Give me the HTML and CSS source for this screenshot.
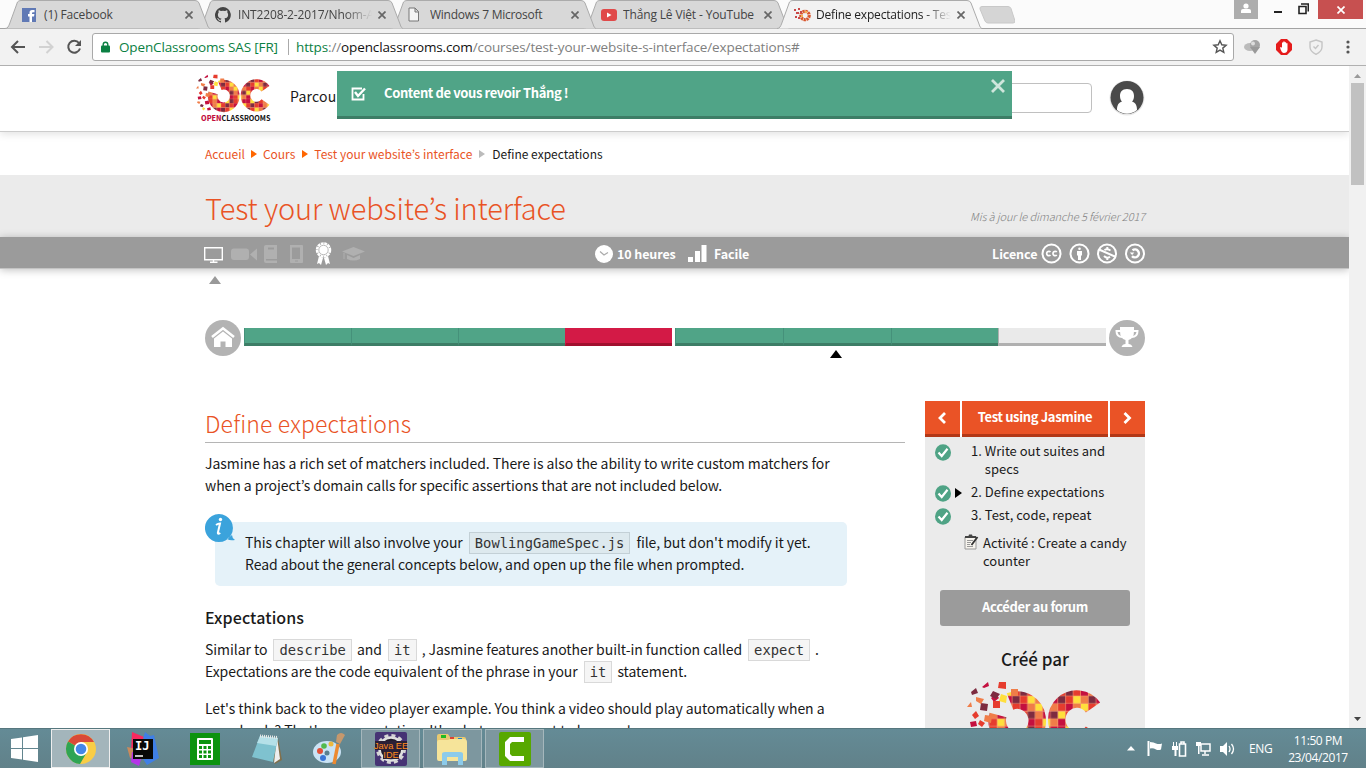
FILE: index.html
```html
<!DOCTYPE html>
<html lang="fr">
<head>
<meta charset="utf-8">
<title>Define expectations - Test your website's interface</title>
<link rel="stylesheet" href="styles.css">
</head>
<body>
<svg class="defs" width="0" height="0">
  <defs>
    <pattern id="mosaic" width="45.6" height="45.6" patternUnits="userSpaceOnUse">
      <rect width="45.6" height="45.6" fill="#f29a78"/>
      <path fill="#c4103f" d="M0 0h7v7H0zM22.8 7.6h7v7h-7zM38 15.2h7v7h-7zM7.6 22.8h7v7h-7zM30.4 30.4h7v7h-7zM15.2 38h7v7h-7zM38 0h7v7h-7zM0 38h7v7H0z"/>
      <path fill="#7d2b40" d="M15.2 0h7v7h-7zM0 15.2h7v7H0zM30.4 15.2h7v7h-7zM15.2 30.4h7v7h-7zM38 30.4h7v7h-7zM7.6 7.6h7v7h-7z"/>
      <path fill="#ffdf3c" d="M7.6 0h7v7h-7zM38 7.6h7v7h-7zM15.2 15.2h7v7h-7zM22.8 22.8h7v7h-7zM0 30.4h7v7H0zM30.4 38h7v7h-7z"/>
      <path fill="#e63c2e" d="M22.8 0h7v7h-7zM0 7.6h7v7H0zM15.2 7.6h7v7h-7zM7.6 15.2h7v7h-7zM30.4 22.8h7v7h-7zM0 22.8h7v7H0zM22.8 38h7v7h-7zM7.6 30.4h7v7h-7z"/>
      <path fill="#f07d48" d="M30.4 0h7v7h-7zM30.4 7.6h7v7h-7zM22.8 15.2h7v7h-7zM15.2 22.8h7v7h-7zM38 22.8h7v7h-7zM22.8 30.4h7v7h-7zM7.6 38h7v7h-7zM38 38h7v7h-7z"/>
    </pattern>
    <symbol id="oc" viewBox="0 0 136 72">
      <path d="M43 20.500A20 20.500 0 1 1 31 34" fill="none" stroke="url(#mosaic)" stroke-width="17.500"/>
      <path d="M126 26.500A20 20.500 0 1 0 126 50.500" fill="none" stroke="url(#mosaic)" stroke-width="17.500"/>
      <path fill="#c4103f" d="M15 6l6-5 1 4-5 2zM24 17l5-4 3 4-5 4zM3 41l6-1 1 5-6 1zM16 49l7-1 1 6-7 1zM20 62l6-2 1 5-6 1z"/>
      <path fill="#7d2b40" d="M4 11l5-4 2 5-6 2zM26 10l7 3-4 5-6-3zM14 22l7 1-1 7-7-1zM9 54l5 2-2 4-5-2z"/>
      <path fill="#e63c2e" d="M32 1h7v7l-8-1zM26 20h7v7h-7zM5 34l4-4 3 5-4 3zM13 39l5 3-3 4-4-3z"/>
      <path fill="#f07d48" d="M9 16l8 2-3 5-5-3zM0 26l4-5 1 5zM18 34l7 1-1 7-7-2zM44 8h7v7h-7zM3 49l5 1-2 4-4-2z"/>
      <path fill="#ffdf3c" d="M34 13l6 2-1 7-7-2zM13 60l4 2-3 4-3-3z"/>
    </symbol>
    <symbol id="tabshape" viewBox="0 0 205 29" preserveAspectRatio="none">
      <path d="M0 28.500C3 28.500 3.500 26 4.500 24L12.500 2Q13.500.5 16 .5H190Q193 .5 194 3L202 24C203 27 203.500 28.500 206 28.500" />
    </symbol>
    <symbol id="cross" viewBox="0 0 8 8"><path d="M.5.5l7 7m0-7l-7 7" stroke-width="1.700" fill="none"/></symbol>
    <symbol id="check" viewBox="0 0 16 17"><ellipse cx="8" cy="8.500" rx="8" ry="8.300" fill="#4fa385"/><path d="M3.500 8.500l3.200 3.500L12.500 4.800" fill="none" stroke="#fff" stroke-width="2.200"/></symbol>
  </defs>
</svg>
<div class="window">
  <div class="tabstrip">
    <div class="tab t1"><svg class="shape"><use href="#tabshape"/></svg>
      <svg class="fav" width="14" height="14"><rect width="14" height="14" fill="#6079b5"/><path d="M7.500 14V8.500H6V6h1.500V4.500Q7.500 2 10 2h2.500v2.300H11Q10 4.300 10 5.200V6h2.400L12 8.500h-2V14z" fill="#fff"/></svg>
      <span class="label">(1) Facebook</span><svg class="x"><use href="#cross"/></svg></div>
    <div class="tab t2"><svg class="shape"><use href="#tabshape"/></svg>
      <svg class="fav" width="16" height="16" viewBox="0 0 16 16"><path fill="#444" d="M8 0a8 8 0 0 0-2.500 15.600c.4.100.5-.2.500-.4v-1.400c-2.200.5-2.700-1-2.700-1-.4-.9-.9-1.200-.9-1.200-.7-.5.1-.5.1-.5.8.1 1.200.8 1.200.8.700 1.200 1.900.9 2.300.7.100-.5.300-.9.500-1.100-1.800-.2-3.600-.9-3.600-4 0-.9.300-1.600.8-2.100-.1-.2-.4-1 .1-2.100 0 0 .7-.2 2.200.8a7.500 7.500 0 0 1 4 0c1.500-1 2.200-.8 2.200-.8.400 1.100.2 1.900.1 2.100.5.600.8 1.300.8 2.100 0 3.100-1.900 3.700-3.700 3.900.3.300.6.800.6 1.500v2.200c0 .2.100.5.600.4A8 8 0 0 0 8 0z"/></svg>
      <span class="label fade">INT2208-2-2017/Nhom-A</span><svg class="x"><use href="#cross"/></svg></div>
    <div class="tab t3"><svg class="shape"><use href="#tabshape"/></svg>
      <svg class="fav" width="12" height="15"><path d="M1 1h6l3.500 3.500V14H1zM7 1v4h3.500" fill="#f4f4f4" stroke="#777"/></svg>
      <span class="label">Windows 7 Microsoft</span><svg class="x"><use href="#cross"/></svg></div>
    <div class="tab t4"><svg class="shape"><use href="#tabshape"/></svg>
      <svg class="fav" width="16" height="12"><rect width="16" height="12" rx="3" fill="#e04a4a"/><path d="M6 3.500l4.500 2.500L6 8.500z" fill="#fff"/></svg>
      <span class="label">Thắng Lê Việt - YouTube</span><svg class="x"><use href="#cross"/></svg></div>
    <div class="tab active"><svg class="shape"><use href="#tabshape"/></svg>
      <svg class="fav" width="17" height="15" viewBox="0 0 17 15"><circle cx="11" cy="8.500" r="4.200" fill="none" stroke="#d9572e" stroke-width="3.200" stroke-dasharray="2.200 .6"/><path d="M0 2h2v2H0zM4 1h2v2H4zM2 5h3v2H2zM6 4h2v2H6zM1 9h2v2H1zM4 10h2v2H4z" fill="#c84848"/><path d="M11 4h2v2h-2zM7 8h2v2H7z" fill="#f6b050"/></svg>
      <span class="label fade">Define expectations - Test</span><svg class="x"><use href="#cross"/></svg></div>
    <svg class="newtab" width="36" height="18"><path d="M3 .5h26q2 0 3 2l4 12.500q.3 2-2 2H9q-2 0-3-2L1 3Q.5.500 3 .5z" fill="#d5d5d5" stroke="#c8c8c8"/></svg>
    <div class="controls">
      <span class="user"><svg width="10" height="10"><circle cx="5" cy="3" r="2.600" fill="#fff"/><path d="M0 10V8q0-2 2-2h6q2 0 2 2v2z" fill="#fff"/></svg></span>
      <svg width="8" height="19"><path d="M0 12h8" stroke="#222" stroke-width="2"/></svg>
      <svg class="restore" width="11" height="19"><path d="M1 6.500h7v7H1zM3 4h7.300v7.500" fill="none" stroke="#222" stroke-width="1.600"/></svg>
      <span class="close"><svg width="8" height="8" stroke="#fff"><use href="#cross"/></svg></span>
    </div>
  </div>
  <div class="toolbar">
    <svg class="navs" width="76" height="20" fill="none" stroke-width="2"><path d="M15 10H2M8 4l-6 6 6 6" stroke="#555"/><path d="M29 10h13M36.500 4l6 6-6 6" stroke="#d2d2d2"/><path d="M69 6a6 6 0 1 0 1 5.500" stroke="#555"/><path d="M71 3v6h-6z" fill="#555"/></svg>
    <div class="omnibox">
      <svg width="9" height="12"><path d="M2.200 5V3.500a2.300 2.300 0 0 1 4.600 0V5" fill="none" stroke="#0b8043" stroke-width="1.400"/><rect y="4.500" width="9" height="7" rx="1" fill="#0b8043"/></svg>
      <span class="cert">OpenClassrooms SAS [FR]</span><i></i>
      <span class="url"><b>https</b>://<em>openclassrooms.com</em>/courses/test-your-website-s-interface/expectations#</span>
      <svg class="star" width="16" height="16" viewBox="0 0 16 16"><path d="M8 1.800l1.800 4 4.300.4-3.300 2.900 1 4.300L8 11.100l-3.800 2.300 1-4.300L1.900 6.200l4.300-.4z" fill="none" stroke="#555" stroke-width="1.400"/></svg>
    </div>
    <svg class="ext" width="17" height="16"><ellipse cx="6" cy="8" rx="6" ry="4" fill="#bbb"/><ellipse cx="11" cy="6" rx="5" ry="5" fill="#a5a5a5"/><path d="M6 8l5 7 5-7z" fill="#999"/><circle cx="9" cy="4.500" r="2" fill="#ddd"/></svg>
    <svg class="ext e2" width="16" height="16"><path d="M5 0h6l5 5v6l-5 5H5l-5-5V5z" fill="#e51c1c"/><path d="M4 8.500l1.200-.5.800 1V3.500h1.300V2.500h1.400v.7h1.400v1h1.400V11q-.5 3-3.500 3-2.500 0-4-5.500z" fill="#fff"/></svg>
    <svg class="ext e3" width="14" height="16"><path d="M7 1l6 2v5q0 4.500-6 7.300Q1 12.500 1 8V3zM4.500 7.500L6.500 9.500 9.500 6" fill="none" stroke="#c5c5c5" stroke-width="1.400"/></svg>
    <svg class="ext e4" width="4" height="14" fill="#555"><circle cx="2" cy="2" r="1.600"/><circle cx="2" cy="7" r="1.600"/><circle cx="2" cy="12" r="1.600"/></svg>
  </div>
  <div class="viewport">
    <main class="page">
      <header class="top">
        <div class="brand"><svg width="75" height="40"><use href="#oc"/></svg><span class="name"><b>OPEN</b>CLASSROOMS</span></div>
        <span class="parcours">Parcours</span>
        <div class="search"></div>
        <svg class="avatar" width="36" height="36"><circle cx="18" cy="18" r="17.500" fill="#e8e8e8"/><circle cx="18" cy="17.500" r="16.500" fill="#4a4a4a"/><path d="M18 9c5 0 7 3.200 7 7 0 3-1 4.500-2 5.500 3 1 5 3 5 8.500q-10 7.500-20 0c0-5.500 2-7.500 5-8.500-1-1-2-2.500-2-5.500 0-3.800 2-7 7-7z" fill="#fff"/></svg>
        <div class="notice"><svg width="15" height="14"><path d="M11 1.500H1.500v11h11V7" fill="none" stroke="#fff" stroke-width="1.800"/><path d="M4 5l3 4 7-7.500" fill="none" stroke="#fff" stroke-width="2.400"/></svg><span>Content de vous revoir Thắng !</span><svg class="nx" width="14" height="14"><path d="M1 1l12 12M13 1L1 13" stroke="#cfe6dc" stroke-width="2.800"/></svg></div>
      </header>
      <nav class="crumbs"><a>Accueil</a><i></i><a>Cours</a><i></i><a class="c3">Test your website’s interface</a><i class="g"></i><span>Define expectations</span></nav>
      <section class="titlebar"><h1>Test your website’s interface</h1><em>Mis à jour le dimanche 5 février 2017</em></section>
      <section class="meta">
        <svg class="kinds" width="164" height="28" viewBox="0 0 164 28">
          <path d="M.7 8.700h17.600v12H.7zM9.500 21v2M6 23.200h7.500" fill="none" stroke="#fff" stroke-width="1.400"/>
          <g fill="#b0b0b0"><rect x="27" y="9.500" width="18" height="11.500" rx="3"/><path d="M46 15.500l7-6v12z"/><path d="M60 8q0-2 2-2h11v14H62v1.500h11V24H62q-2 0-2-2z"/><path d="M86 6h12q1 0 1 1v16q0 1-1 1H87q-1 0-1-1z"/><path d="M138 12.500L149.500 8 161 12.500 149.500 17zM143 16l6.500 3 6.500-3v4q-6.500 3-13 0zM139.500 14h1v6h-1z"/></g>
          <path d="M64 8.500h6v2h-6zM88 8.500h8v11.500h-8zM91 21.500h3v1h-3z" fill="#9b9b9b"/>
          <circle cx="119.500" cy="11" r="6.500" fill="none" stroke="#fff" stroke-width="2.500" stroke-dasharray="2.800 .6"/><circle cx="119.500" cy="11" r="5.800" fill="#fff"/><circle cx="119.500" cy="11" r="4.700" fill="none" stroke="#aaa" stroke-width=".8"/><path d="M115 17l4 2-2 7-2-2-2 1zM124 17l-4 2 2 7 2-2 2 1z" fill="#fff"/>
        </svg>
        <svg class="clock" width="18" height="18"><circle cx="9" cy="9" r="9" fill="#fff"/><path d="M5 6.500L9 10l4-2.500" fill="none" stroke="#aaa" stroke-width="1.200"/></svg>
        <b class="hours">10 heures</b>
        <svg class="bars" width="19" height="17" fill="#fff"><path d="M0 12h5v5H0zM7 6h5v11H7zM13.500 0h5v17h-5z"/></svg>
        <b class="level">Facile</b>
        <b class="lic">Licence</b>
        <svg class="cc" width="105" height="21" fill="none" stroke="#fff" stroke-width="2"><circle cx="10.500" cy="10.500" r="9"/><circle cx="38.500" cy="10.500" r="9"/><circle cx="66" cy="10.500" r="9"/><circle cx="94" cy="10.500" r="9"/><path d="M9.500 9a2.200 2.200 0 1 0 0 3M15.800 9a2.200 2.200 0 1 0 0 3" stroke-width="1.700"/><circle cx="38.500" cy="5.800" r="1.300" fill="#fff" stroke="none"/><path d="M36 8h5v4.500h-1V17h-3v-4.500h-1z" fill="#fff" stroke="none"/><path d="M58 6.500l17 7.500M69.500 7.500q-3.500-2-6-.5M63 13q3 3 6 .7M66.300 4v2M66.300 15v2"/><path d="M91.500 7.200a4 4 0 1 1-.5 6" stroke-width="2.400"/><path d="M88.800 9.500h4.500l-2.200 2.500z" fill="#fff" stroke="none"/></svg>
      </section>
      <div class="marker"></div>
      <section class="progress">
        <svg width="36" height="36"><circle cx="18" cy="18" r="18" fill="#b3b3b3"/><path d="M9 17l9-7.500 9 7.500v10h-6.500v-5.500h-5V27H9z" fill="#fff"/><path d="M6.500 18.500L18 9.500l11.500 9" fill="none" stroke="#b3b3b3" stroke-width="3"/><path d="M7 17L18 8.300 29 17" fill="none" stroke="#fff" stroke-width="2.600"/></svg>
        <div class="track"><i class="p"></i><i class="p"></i><i class="p"></i><i class="p red"></i><i class="gap"></i><i></i><i></i><i></i><i class="todo"></i></div>
        <svg width="36" height="36"><circle cx="18" cy="18" r="18" fill="#b3b3b3"/><path d="M11 7h14v4q0 8-5.500 9v4q3 0 4 3h-11q1-3 4-3v-4Q11 19 11 11z" fill="#fff"/><path d="M12 11H7.500q0 6 6 6M24 11h4.500q0 6-6 6" fill="none" stroke="#fff" stroke-width="2"/></svg>
      </section>
      <div class="here"></div>
      <div class="columns">
        <article>
          <h2>Define expectations</h2>
          <p class="intro">Jasmine has a rich set of matchers included. There is also the ability to write custom matchers for<br>when a project’s domain calls for specific assertions that are not included below.</p>
          <div class="info"><svg class="bubble" width="30" height="29"><path d="M14 0a14 14 0 1 1-.1 0zM22 25q3 2 8 1-3-2-3-5z" fill="#3ba3dc"/><path d="M11 11q2-1.500 4-1.500l-2.200 9.500q0 1.500 2.500 0" fill="none" stroke="#fff" stroke-width="2"/><circle cx="15.500" cy="5.500" r="1.700" fill="#fff"/></svg>
            <span>This chapter will also involve your <code>BowlingGameSpec.js</code> file, but don't modify it yet.</span><br><span>Read about the general concepts below, and open up the file when prompted.</span></div>
          <h3>Expectations</h3>
          <p class="sim">Similar to <code>describe</code> and <code>it</code> , Jasmine features another built-in function called <code>expect</code> .<br>Expectations are the code equivalent of the phrase in your <code>it</code> statement.</p>
          <p class="think">Let's think back to the video player example. You think a video should play automatically when a<br>page loads? That's an expectation. It's what you expect to happen!</p>
        </article>
        <aside>
          <div class="chapter"><span class="arr"><svg width="9" height="12"><path d="M7 1L2 6l5 5" fill="none" stroke="#fff" stroke-width="2.800"/></svg></span><span class="name">Test using Jasmine</span><span class="arr"><svg width="9" height="12"><path d="M1.500 1l5 5-5 5" fill="none" stroke="#fff" stroke-width="2.800"/></svg></span></div>
          <ul>
            <li class="a"><svg class="ok" width="16" height="17"><use href="#check"/></svg><span>1. </span><span>Write out suites and<br>specs</span></li>
            <li class="b"><svg class="ok" width="16" height="17"><use href="#check"/></svg><svg class="cur" width="7" height="10"><path d="M0 0l7 5-7 5z"/></svg><span>2. </span><span>Define expectations</span></li>
            <li class="c"><svg class="ok" width="16" height="17"><use href="#check"/></svg><span>3. </span><span>Test, code, repeat</span></li>
          </ul>
          <div class="activity"><svg width="15" height="16"><path d="M1 3h11v12H1z" fill="#f7f4ee" stroke="#999"/><path d="M1 2h3.500l.5-1.500h3L8.500 2H12v2H1z" fill="#444"/><path d="M3 6.500h6M3 8.500h4M3 10.500h3M3 12.500h6" stroke="#999"/><path d="M13.500 3L7.500 11" stroke="#333" stroke-width="1.800"/></svg><span>Activité : Create a candy<br>counter</span></div>
          <div class="forum">Accéder au forum</div>
          <div class="by">Créé par</div>
          <svg class="biglogo" width="136" height="72"><use href="#oc"/></svg>
        </aside>
      </div>
    </main>
    <div class="scroll"><svg width="7" height="4"><path d="M0 4l3.500-4L7 4z" fill="#999"/></svg><div class="thumb"></div><svg class="down" width="7" height="4"><path d="M0 0h7L3.500 4z" fill="#444"/></svg></div>
  </div>
  <footer class="taskbar">
    <svg class="start" width="27" height="27" fill="#fff"><path d="M0 4l11-1.600V13H0zM12 2.200L27 0v13H12zM0 14h11v10.500L0 23zM12 14h15v13l-15-2.200z"/></svg>
    <span class="app on"><svg width="30" height="30" viewBox="0 0 30 30"><circle cx="15" cy="15" r="15" fill="#f9cd45"/><path d="M15 15L2 7.500A15 15 0 0 1 28 8H15z" fill="#d94a38"/><path d="M2 7.500A15 15 0 0 0 14 30l7-12-6-3z" fill="#2fa454"/><circle cx="15" cy="15" r="7" fill="#fff"/><circle cx="15" cy="15" r="5.300" fill="#4487e8"/></svg></span>
    <span class="app"><svg width="32" height="34" viewBox="0 0 32 34"><path d="M5 0l12 5 2 14L4 20z" fill="#f8295f"/><path d="M18 0l5 4 4-1 5 23-12 7-8-12z" fill="#3f7fe6"/><path d="M0 15l10 2 3 12-10-3z" fill="#c98a5c"/><path d="M5 20l10 4-3 10-8-4z" fill="#b534e8"/><rect x="6" y="7" width="20" height="20" fill="#080808"/><path d="M8 24h8" stroke="#fff" stroke-width="1.500"/><text x="8" y="18" class="ij">IJ</text></svg></span>
    <span class="app"><svg width="30" height="32"><path fill="#0c930f" d="M0 0h30v32H0z"/><rect x="7" y="5" width="16" height="22" rx="1" fill="#fff"/><path d="M9 7h12v4H9zM9 13h3v3H9zM13.500 13h3v3h-3zM18 13h3v3h-3zM9 17.500h3v3H9zM13.500 17.500h3v3h-3zM18 17.500h3v3h-3zM9 22h3v3H9zM13.500 22h3v3h-3zM18 22h3v3h-3z" fill="#0c930f"/></svg></span>
    <span class="app"><svg width="32" height="32"><path d="M9 3l18 2 4 22-7 4z" fill="#82704c"/><path d="M26 4l3 22-6 4z" fill="#eee"/><path d="M9 3l18 2-5 24L1 24z" fill="#7fc2cf"/><path d="M9 3l18 2-2 8L6 10z" fill="#b5e0e8"/><path d="M9 3l18 1.500" stroke="#e8e8e8" stroke-width="3" stroke-dasharray="1 1"/></svg></span>
    <span class="app"><svg width="32" height="33"><ellipse cx="14" cy="20" rx="14" ry="11" fill="#cae3f5"/><circle cx="7" cy="19" r="3" fill="#e25038"/><circle cx="11" cy="14" r="2.800" fill="#52b94c"/><circle cx="18" cy="12" r="2.500" fill="#edb83d"/><circle cx="14" cy="21" r="2.500" fill="#597f8f"/><circle cx="10" cy="26" r="3" fill="#3a75d6"/><path d="M21 32l4-20" stroke="#ed8a30" stroke-width="3.500"/><path d="M23 10l1-7q4-4 8 0l-5 9z" fill="#c6986d"/></svg></span>
    <span class="app run"><svg width="32" height="34"><rect width="32" height="34" rx="2" fill="#463374"/><circle cx="16" cy="17" r="11.500" fill="#211b2c" stroke="#e1e1e1" stroke-width="2.500"/><circle cx="16" cy="17" r="13.500" fill="none" stroke="#d5d5d5" stroke-width="3" stroke-dasharray="4 3.070"/><path d="M0 9h32v9H0zM8 18h16v9H8z" fill="#2b2036"/><text x="16" y="17" text-anchor="middle" class="jee">Java EE</text><text x="16" y="26" text-anchor="middle" class="jee">IDE</text></svg></span>
    <span class="app run"><svg width="33" height="32"><path d="M1 3q0-2 2-2h9l2 3h14q2 0 2 2v20H1z" fill="#e8c970"/><path d="M5 2h5v3H5z" fill="#2b2"/><path d="M14 4h4v2h-4z" fill="#d43"/><path d="M22 5h4v2h-4z" fill="#28c"/><path d="M1 9q0-2 2-2h9l2-1h14q3 0 3 3v17q0 2-2 2H3q-2 0-2-2z" fill="#f6e49a"/><path d="M6 32V21q0-2 3-2h15q3 0 3 2v11h-5v-8H11v8z" fill="#8ccbea"/></svg></span>
    <span class="app run"><svg width="32" height="34"><rect width="32" height="34" rx="2" fill="#57a800"/><path d="M25 5v5H13l-2 2v10l2 2h12v5H11l-5-5V10l5-5z" fill="#fff"/></svg></span>
    <div class="tray">
      <svg width="8" height="5"><path d="M0 4.500L4 0l4 4.500z" fill="#fff"/></svg>
      <svg class="flag" width="16" height="17"><path d="M1.500 1v15" stroke="#fff" stroke-width="2"/><path d="M3 2q4 0 6 1.500 3 1 6 0l-1 6q-3 1-5 0-3-2-6-1z" fill="#fff"/></svg>
      <svg class="bat" width="15" height="16"><path d="M7.500 3h6v12h-6zM9 1h3v2H9z" fill="none" stroke="#fff" stroke-width="1.600"/><path d="M0 5h6v4H4.500v6h-2V9H0zM1 1h1v4H1zM4 1h1v4H4z" fill="#fff"/></svg>
      <svg class="net" width="15" height="16"><path d="M5 3h9v7H5zM9 10v3M6 14h7" fill="none" stroke="#fff" stroke-width="1.500"/><path d="M0 1h5v4H3.500v8H2V5H0z" fill="#fff"/></svg>
      <svg class="vol" width="15" height="14"><path d="M0 4h3l4-4v14l-4-4H0z" fill="#fff"/><path d="M9 4q2 3 0 6M11.500 2q4 5 0 10" fill="none" stroke="#fff" stroke-width="1.300"/></svg>
      <span class="lang">ENG</span>
      <span class="time">11:50 PM<br>23/04/2017</span>
    </div>
  </footer>
</div>
</body>
</html>
```
FILE: styles.css
```css
* { box-sizing: border-box; }
body { margin: 0; overflow: hidden; }
svg { display: block; flex: none; }
.defs { position: absolute; }
h1, h2, h3, p, ul { margin: 0; padding: 0; font-weight: 400; }
.window { width: 1366px; height: 768px; display: flex; flex-direction: column; overflow: hidden; font-family: "Open Sans", sans-serif; }

.tabstrip { height: 29px; flex: none; display: flex; background: #fbfbfb; padding-left: 5px; border-bottom: 1px solid #a3a3a3; }
.tab { position: relative; width: 205px; height: 29px; margin-right: -12px; flex: none; display: flex; align-items: center; padding-left: 17px; z-index: 4; }
.t2 { z-index: 3; }
.t3 { z-index: 2; }
.t4 { z-index: 1; }
.tab.active { z-index: 5; }
.shape { position: absolute; left: 0; top: 0; width: 205px; height: 29px; z-index: -1; fill: #d8d8d8; stroke: #ababab; }
.active .shape { fill: #f2f2f2; }
.label { width: 139px; margin-left: 8px; font-size: 12px; color: #444; white-space: nowrap; overflow: hidden; letter-spacing: -.15px; }
.active .label { color: #222; }
.t2 .label { width: 134px; margin-left: 7px; }
.t3 .label { margin-left: 10px; letter-spacing: -.25px; }
.t4 .label { width: 136px; margin-left: 6px; }
.active .label { width: 135px; margin-left: 5px; letter-spacing: -.2px; }
.fade { -webkit-mask-image: linear-gradient(90deg, #000 80%, transparent); mask-image: linear-gradient(90deg, #000 80%, transparent); }
.x { width: 8px; height: 8px; margin-left: auto; margin-right: 17px; stroke: #666; }
.newtab { margin: 6px 0 0 9px; }
.controls { display: flex; margin-left: auto; align-items: flex-start; padding-right: 3px; }
.user { width: 24px; height: 19px; background: #adadad; display: flex; justify-content: center; padding-top: 3px; margin-right: 16px; }
.restore { margin: 0 9px 0 16px; }
.close { width: 45px; height: 19px; background: #c75050; display: flex; align-items: center; justify-content: center; }

.toolbar { height: 37px; flex: none; display: flex; align-items: center; background: #f2f2f2; border-bottom: 1px solid #b0b0b0; padding-left: 10px; }
.navs { margin-right: 6px; }
.omnibox { width: 1142px; height: 28px; background: #fff; border: 1px solid #a9a9a9; border-radius: 3px; display: flex; align-items: center; padding-left: 8px; font-size: 13.5px; white-space: nowrap; }
.cert { color: #0b8043; margin-left: 9px; width: 161px; letter-spacing: -.14px; }
.omnibox i { width: 1px; height: 16px; background: #aaa; margin: 0 7px 0 8px; }
.url { color: #808080; letter-spacing: -.12px; }
.url b { font-weight: 400; color: #0b8043; }
.url em { font-style: normal; color: #111; }
.star { margin-left: auto; margin-right: 5px; }
.ext { margin-left: 10px; }
.e2 { margin-left: 15px; }
.e3 { margin-left: 17px; }
.e4 { margin-left: 23px; }

.viewport { height: 662px; flex: none; display: flex; overflow: hidden; }
.page { width: 1349px; height: 662px; overflow: hidden; background: #fff; color: #1a1a1a; font-family: "Noto Sans CJK KR", "Noto Sans", sans-serif; font-size: 14px; line-height: 22px; }
.top { position: relative; z-index: 1; height: 66px; border-bottom: 1px solid #ccc; box-shadow: 0 2px 8px rgba(0,0,0,.12); display: flex; }
.brand { width: 75px; margin: 8px 0 0 196px; }
.brand .name { display: block; font: 700 7.2px/10px "Noto Sans CJK KR", sans-serif; margin: -1px 0 0 5px; color: #111; white-space: nowrap; }
.brand .name b { color: #c4103f; }
.parcours { margin: 19px 0 0 19px; width: 60px; letter-spacing: .2px; }
.search { width: 742px; height: 30px; margin-top: 17px; border: 1px solid #c0c0c0; border-radius: 4px; }
.avatar { margin: 14px 0 0 17px; }
.notice { position: absolute; left: 337px; top: 5px; width: 675px; height: 48px; background: #50a487; border-bottom: 3px solid #3d7d66; display: flex; align-items: center; padding-left: 14px; color: #fff; font-weight: 700; font-size: 13px; letter-spacing: -.38px; }
.notice span { margin: -1px 0 0 18px; }
.nx { margin: -15px 7px 0 auto; }
.crumbs { height: 43px; display: flex; align-items: center; padding: 1px 0 0 205px; font-size: 12px; white-space: nowrap; }
.crumbs a { color: #e9541f; }
.crumbs a.c3 { letter-spacing: .03px; }
.crumbs i { border: 4px solid transparent; border-left: 6px solid #f60; border-right: 0; margin: 0 6px 0 7px; }
.crumbs i:first-of-type { margin-left: 6px; }
.crumbs i.g { border-left-color: #bbb; margin-right: 7px; }
.titlebar { height: 62px; background: #ebebeb; display: flex; justify-content: space-between; padding: 0 204px 0 205px; }
h1 { font-size: 29px; line-height: 64px; font-weight: 300; color: #e95325; white-space: nowrap; letter-spacing: -.14px; }
.titlebar em { font-size: 11px; letter-spacing: -.1px; color: #808080; margin-top: 31px; line-height: 20px; font-weight: 300; }
.meta { height: 32px; background: #9b9b9b; border-bottom: 1px solid #c4c4c4; box-shadow: 0 1px 8px rgba(0,0,0,.25); display: flex; align-items: center; padding-left: 204px; color: #fff; font-size: 12.5px; white-space: nowrap; padding-top: 2px; letter-spacing: -.1px; }
.kinds { margin-top: -2px; }
.clock { margin-left: 227px; }
.hours { margin-left: 4px; width: 59px; }
.bars { margin-left: 12px; }
.level { margin-left: 7px; width: 36px; }
.lic { margin-left: 242px; width: 46px; }
.cc { margin-left: 3px; }
.marker { width: 0; border: 6px solid transparent; border-top: 0; border-bottom: 8px solid #999; margin: 7px 0 0 209px; }
.progress { display: flex; height: 36px; margin: 36px 0 0 205px; gap: 3px; }
.track { width: 862px; height: 18px; margin-top: 8px; display: flex; }
.track i { flex: 1; background: #50a487; border-bottom: 3px solid #3d7d66; border-left: 1px solid #45917a; }
.track .p { flex: 0 0 107px; }
.track .red { background: #d31a46; border-bottom-color: #a10f2e; border-left-color: #d31a46; }
.track .gap { flex: none; width: 3px; background: none; border: 0; }
.track .todo { background: #eaeaea; border-bottom-color: #b0b0b0; border-left-color: #b0b0b0; }
.here { width: 0; border: 6px solid transparent; border-top: 0; border-bottom: 8px solid #000; margin: -6px 0 0 830px; }
.columns { display: flex; padding: 43px 0 0 205px; gap: 20px; }
article { width: 700px; white-space: nowrap; letter-spacing: -.06px; }
h2 { height: 42px; border-bottom: 1px solid #b5b5b5; font-size: 23px; line-height: 45px; font-weight: 300; color: #e95325; letter-spacing: .15px; }
.intro { margin-top: 9px; }
code { display: inline-block; font: 13.8px/20px "DejaVu Sans Mono", monospace; border: 1px solid #d9d9d9; background: #f5f5f5; padding: 0 5px; margin: 0 2px 0 3px; height: 22px; vertical-align: top; color: #333; letter-spacing: 0; }
.info { position: relative; margin: 26px 0 0 10px; width: 632px; height: 64px; border-radius: 5px; background: #e5f2f9; padding: 9px 0 0 30px; }
.info code { background: #dde9ee; border-color: #c3d0d6; margin-right: 3px; }
.info code, .sim code { position: relative; top: 1px; }
.bubble { position: absolute; left: -10px; top: -8px; }
h3 { font-size: 16px; font-weight: 500; margin-top: 20px; line-height: 22px; letter-spacing: .1px; }
.sim { margin-top: 10px; }
.think { margin-top: 15px; }
aside { width: 220px; height: 400px; background: #ebebeb; font-size: 13px; line-height: 18px; white-space: nowrap; }
.chapter { display: flex; gap: 2px; background: #fff; height: 36px; color: #fff; font-weight: 700; letter-spacing: -.35px; }
.chapter span { background: #ea5326; border-bottom: 3px solid #b23817; display: flex; align-items: center; justify-content: center; }
.chapter .arr { width: 35px; }
.chapter .name { flex: 1; padding-bottom: 1px; }
ul { list-style: none; }
li { position: relative; display: flex; padding-left: 46px; gap: 3px; }
.a, .b, .c { margin-top: 5px; }
.ok { position: absolute; left: 10px; top: 2px; }
.cur { position: absolute; left: 30px; top: 5px; }
.activity { display: flex; margin: 10px 0 0 39px; gap: 4px; }
.forum { width: 190px; height: 36px; margin: 20px 0 0 15px; border-radius: 3px; background: #9b9b9b; color: #fff; font-weight: 700; text-align: center; line-height: 34px; letter-spacing: -.36px; }
.by { text-align: center; font-size: 17px; font-weight: 500; line-height: 24px; margin-top: 21px; }
.biglogo { margin: 10px 0 0 42px; }
.scroll { width: 17px; background: #f1f1f1; display: flex; flex-direction: column; align-items: center; padding: 8px 0 7px; }
.thumb { width: 13px; height: 102px; margin: 5px 0 0; background: #c1c1c1; }
.down { margin-top: auto; }

.taskbar { height: 40px; flex: none; background: linear-gradient(#648b96, #618189); display: flex; align-items: center; padding-left: 11px; border-top: 1px solid #56777e; }
.start { margin-right: 13px; }
.app { width: 59px; height: 39px; margin-right: 3px; display: flex; align-items: center; justify-content: center; border: 1px solid transparent; }
.app.on { background: #a3b5bb; border-color: #eee; }
.app.run { background: #7d979f; border-color: #a5b7bc; }
.app svg { overflow: visible; }
.ij { font: 700 12px "DejaVu Sans Mono", monospace; fill: #fff; }
.jee { font: 9.2px "Liberation Sans", sans-serif; fill: #ff8b1d; }
.tray { margin-left: auto; display: flex; align-items: center; color: #fff; font-size: 12px; line-height: 17px; padding-right: 17px; white-space: nowrap; }
.flag { margin-left: 12px; }
.bat { margin-left: 9px; }
.net { margin-left: 9px; }
.vol { margin-left: 9px; }
.lang { width: 24px; margin-left: 14px; letter-spacing: -.3px; }
.time { text-align: center; width: 62px; margin-left: 14px; letter-spacing: -.4px; }
```
